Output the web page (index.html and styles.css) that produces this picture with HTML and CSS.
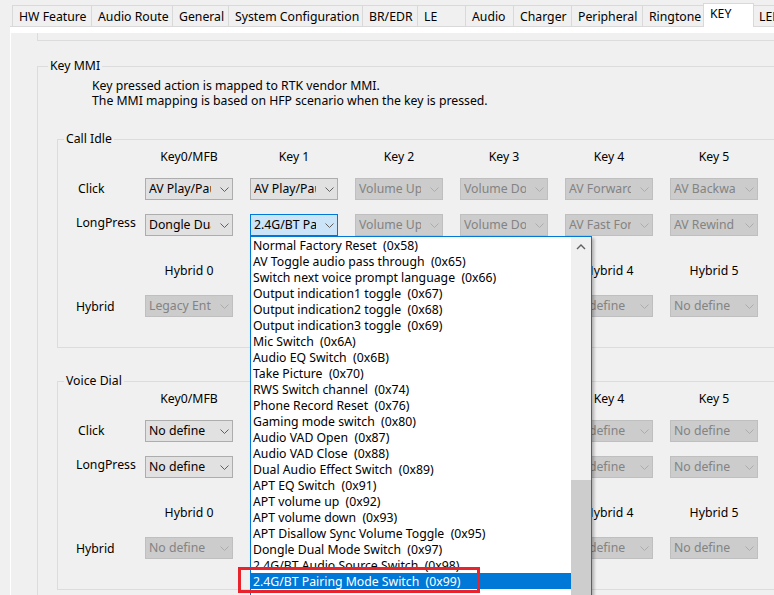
FILE: index.html
```html
<!DOCTYPE html>
<html lang="en">
<head>
<meta charset="utf-8">
<title>KEY</title>
<link rel="stylesheet" href="styles.css">
</head>
<body>
<div class="tabs">
  <div class="tab t-hw">HW Feature</div>
  <div class="tab t-route">Audio Route</div>
  <div class="tab t-gen">General</div>
  <div class="tab t-sys">System Configuration</div>
  <div class="tab t-br">BR/EDR</div>
  <div class="tab t-le">LE</div>
  <div class="tab t-audio">Audio</div>
  <div class="tab t-chg">Charger</div>
  <div class="tab t-per">Peripheral</div>
  <div class="tab t-ring">Ringtone</div>
  <div class="tab t-key active">KEY</div>
  <div class="tab t-led">LED</div>
</div>
<div class="page">
  <div class="scroll">
    <div class="prev-group"></div>
    <fieldset class="group group-mmi">
      <legend>Key MMI</legend>
      <p class="note">Key pressed action is mapped to RTK vendor MMI.<br>The MMI mapping is based on HFP scenario when the key is pressed.</p>

      <fieldset class="group group-sub group-idle">
        <legend>Call Idle</legend>
        <div class="keygrid">
          <div></div>
          <div class="hdr">Key0/MFB</div>
          <div class="hdr">Key 1</div>
          <div class="hdr">Key 2</div>
          <div class="hdr">Key 3</div>
          <div class="hdr">Key 4</div>
          <div class="hdr">Key 5</div>

          <div class="lbl lbl-click">Click</div>
          <div class="combo"><span class="val">AV Play/Pause</span><svg class="chev" viewBox="0 0 9 5"><path d="M0.5 0.5L4.5 4.5L8.5 0.5"/></svg></div>
          <div class="combo"><span class="val">AV Play/Pause</span><svg class="chev" viewBox="0 0 9 5"><path d="M0.5 0.5L4.5 4.5L8.5 0.5"/></svg></div>
          <div class="combo dis"><span class="val">Volume Up</span><svg class="chev" viewBox="0 0 9 5"><path d="M0.5 0.5L4.5 4.5L8.5 0.5"/></svg></div>
          <div class="combo dis"><span class="val">Volume Down</span><svg class="chev" viewBox="0 0 9 5"><path d="M0.5 0.5L4.5 4.5L8.5 0.5"/></svg></div>
          <div class="combo dis"><span class="val">AV Forward</span><svg class="chev" viewBox="0 0 9 5"><path d="M0.5 0.5L4.5 4.5L8.5 0.5"/></svg></div>
          <div class="combo dis"><span class="val">AV Backward</span><svg class="chev" viewBox="0 0 9 5"><path d="M0.5 0.5L4.5 4.5L8.5 0.5"/></svg></div>

          <div class="lbl lbl-lp">LongPress</div>
          <div class="combo"><span class="val">Dongle Dual Mode Switch</span><svg class="chev" viewBox="0 0 9 5"><path d="M0.5 0.5L4.5 4.5L8.5 0.5"/></svg></div>
          <div class="combo focus"><span class="val">2.4G/BT Pairing Mode Switch</span><svg class="chev" viewBox="0 0 9 5"><path d="M0.5 0.5L4.5 4.5L8.5 0.5"/></svg>
            <div class="dropdown">
              <div class="list">
                <div class="item">Normal Factory Reset  (0x58)</div>
                <div class="item">AV Toggle audio pass through  (0x65)</div>
                <div class="item">Switch next voice prompt language  (0x66)</div>
                <div class="item">Output indication1 toggle  (0x67)</div>
                <div class="item">Output indication2 toggle  (0x68)</div>
                <div class="item">Output indication3 toggle  (0x69)</div>
                <div class="item">Mic Switch  (0x6A)</div>
                <div class="item">Audio EQ Switch  (0x6B)</div>
                <div class="item">Take Picture  (0x70)</div>
                <div class="item">RWS Switch channel  (0x74)</div>
                <div class="item">Phone Record Reset  (0x76)</div>
                <div class="item">Gaming mode switch  (0x80)</div>
                <div class="item">Audio VAD Open  (0x87)</div>
                <div class="item">Audio VAD Close  (0x88)</div>
                <div class="item">Dual Audio Effect Switch  (0x89)</div>
                <div class="item">APT EQ Switch  (0x91)</div>
                <div class="item">APT volume up  (0x92)</div>
                <div class="item">APT volume down  (0x93)</div>
                <div class="item">APT Disallow Sync Volume Toggle  (0x95)</div>
                <div class="item">Dongle Dual Mode Switch  (0x97)</div>
                <div class="item">2.4G/BT Audio Source Switch  (0x98)</div>
                <div class="item sel">2.4G/BT Pairing Mode Switch  (0x99)</div>
              </div>
              <div class="vscroll">
                <div class="up"><svg viewBox="0 0 10 6"><path d="M1 5L5 1L9 5"/></svg></div>
                <div class="thumb"></div>
              </div>
              <div class="mark"></div>
            </div>
          </div>
          <div class="combo dis"><span class="val">Volume Up</span><svg class="chev" viewBox="0 0 9 5"><path d="M0.5 0.5L4.5 4.5L8.5 0.5"/></svg></div>
          <div class="combo dis"><span class="val">Volume Down</span><svg class="chev" viewBox="0 0 9 5"><path d="M0.5 0.5L4.5 4.5L8.5 0.5"/></svg></div>
          <div class="combo dis"><span class="val">AV Fast Forward</span><svg class="chev" viewBox="0 0 9 5"><path d="M0.5 0.5L4.5 4.5L8.5 0.5"/></svg></div>
          <div class="combo dis"><span class="val">AV Rewind</span><svg class="chev" viewBox="0 0 9 5"><path d="M0.5 0.5L4.5 4.5L8.5 0.5"/></svg></div>

          <div></div>
          <div class="hdr">Hybrid 0</div>
          <div class="hdr">Hybrid 1</div>
          <div class="hdr">Hybrid 2</div>
          <div class="hdr">Hybrid 3</div>
          <div class="hdr">Hybrid 4</div>
          <div class="hdr">Hybrid 5</div>

          <div class="lbl lbl-hy">Hybrid</div>
          <div class="combo dis"><span class="val">Legacy Enter</span><svg class="chev" viewBox="0 0 9 5"><path d="M0.5 0.5L4.5 4.5L8.5 0.5"/></svg></div>
          <div class="combo dis"><span class="val">No define</span><svg class="chev" viewBox="0 0 9 5"><path d="M0.5 0.5L4.5 4.5L8.5 0.5"/></svg></div>
          <div class="combo dis"><span class="val">No define</span><svg class="chev" viewBox="0 0 9 5"><path d="M0.5 0.5L4.5 4.5L8.5 0.5"/></svg></div>
          <div class="combo dis"><span class="val">No define</span><svg class="chev" viewBox="0 0 9 5"><path d="M0.5 0.5L4.5 4.5L8.5 0.5"/></svg></div>
          <div class="combo dis"><span class="val">No define</span><svg class="chev" viewBox="0 0 9 5"><path d="M0.5 0.5L4.5 4.5L8.5 0.5"/></svg></div>
          <div class="combo dis"><span class="val">No define</span><svg class="chev" viewBox="0 0 9 5"><path d="M0.5 0.5L4.5 4.5L8.5 0.5"/></svg></div>
        </div>
      </fieldset>

      <fieldset class="group group-sub group-voice">
        <legend>Voice Dial</legend>
        <div class="keygrid">
          <div></div>
          <div class="hdr">Key0/MFB</div>
          <div class="hdr">Key 1</div>
          <div class="hdr">Key 2</div>
          <div class="hdr">Key 3</div>
          <div class="hdr">Key 4</div>
          <div class="hdr">Key 5</div>

          <div class="lbl lbl-click">Click</div>
          <div class="combo"><span class="val">No define</span><svg class="chev" viewBox="0 0 9 5"><path d="M0.5 0.5L4.5 4.5L8.5 0.5"/></svg></div>
          <div class="combo dis"><span class="val">No define</span><svg class="chev" viewBox="0 0 9 5"><path d="M0.5 0.5L4.5 4.5L8.5 0.5"/></svg></div>
          <div class="combo dis"><span class="val">No define</span><svg class="chev" viewBox="0 0 9 5"><path d="M0.5 0.5L4.5 4.5L8.5 0.5"/></svg></div>
          <div class="combo dis"><span class="val">No define</span><svg class="chev" viewBox="0 0 9 5"><path d="M0.5 0.5L4.5 4.5L8.5 0.5"/></svg></div>
          <div class="combo dis"><span class="val">No define</span><svg class="chev" viewBox="0 0 9 5"><path d="M0.5 0.5L4.5 4.5L8.5 0.5"/></svg></div>
          <div class="combo dis"><span class="val">No define</span><svg class="chev" viewBox="0 0 9 5"><path d="M0.5 0.5L4.5 4.5L8.5 0.5"/></svg></div>

          <div class="lbl lbl-lp">LongPress</div>
          <div class="combo"><span class="val">No define</span><svg class="chev" viewBox="0 0 9 5"><path d="M0.5 0.5L4.5 4.5L8.5 0.5"/></svg></div>
          <div class="combo dis"><span class="val">No define</span><svg class="chev" viewBox="0 0 9 5"><path d="M0.5 0.5L4.5 4.5L8.5 0.5"/></svg></div>
          <div class="combo dis"><span class="val">No define</span><svg class="chev" viewBox="0 0 9 5"><path d="M0.5 0.5L4.5 4.5L8.5 0.5"/></svg></div>
          <div class="combo dis"><span class="val">No define</span><svg class="chev" viewBox="0 0 9 5"><path d="M0.5 0.5L4.5 4.5L8.5 0.5"/></svg></div>
          <div class="combo dis"><span class="val">No define</span><svg class="chev" viewBox="0 0 9 5"><path d="M0.5 0.5L4.5 4.5L8.5 0.5"/></svg></div>
          <div class="combo dis"><span class="val">No define</span><svg class="chev" viewBox="0 0 9 5"><path d="M0.5 0.5L4.5 4.5L8.5 0.5"/></svg></div>

          <div></div>
          <div class="hdr">Hybrid 0</div>
          <div class="hdr">Hybrid 1</div>
          <div class="hdr">Hybrid 2</div>
          <div class="hdr">Hybrid 3</div>
          <div class="hdr">Hybrid 4</div>
          <div class="hdr">Hybrid 5</div>

          <div class="lbl lbl-hy">Hybrid</div>
          <div class="combo dis"><span class="val">No define</span><svg class="chev" viewBox="0 0 9 5"><path d="M0.5 0.5L4.5 4.5L8.5 0.5"/></svg></div>
          <div class="combo dis"><span class="val">No define</span><svg class="chev" viewBox="0 0 9 5"><path d="M0.5 0.5L4.5 4.5L8.5 0.5"/></svg></div>
          <div class="combo dis"><span class="val">No define</span><svg class="chev" viewBox="0 0 9 5"><path d="M0.5 0.5L4.5 4.5L8.5 0.5"/></svg></div>
          <div class="combo dis"><span class="val">No define</span><svg class="chev" viewBox="0 0 9 5"><path d="M0.5 0.5L4.5 4.5L8.5 0.5"/></svg></div>
          <div class="combo dis"><span class="val">No define</span><svg class="chev" viewBox="0 0 9 5"><path d="M0.5 0.5L4.5 4.5L8.5 0.5"/></svg></div>
          <div class="combo dis"><span class="val">No define</span><svg class="chev" viewBox="0 0 9 5"><path d="M0.5 0.5L4.5 4.5L8.5 0.5"/></svg></div>
        </div>
      </fieldset>
    </fieldset>
  </div>
</div>
</body>
</html>
```
FILE: styles.css
```css
* { box-sizing: border-box; }
html, body { margin: 0; padding: 0; }
body {
  width: 774px;
  height: 595px;
  overflow: hidden;
  background: #f0f0f0;
  font-family: "Noto Sans", "Open Sans", sans-serif;
  font-size: 12.25px;
  line-height: 16px;
  color: #000;
}

/* Tabs */
.tabs {
  display: flex;
  align-items: flex-end;
  height: 26px;
  padding-left: 12px;
}
.tab {
  flex: none;
  height: 21px;
  border: 1px solid #d9d9d9;
  border-bottom: none;
  margin-right: -1px;
  padding-left: 6px;
  line-height: 21px;
  white-space: nowrap;
  overflow: hidden;
  background: #f0f0f0;
}
.t-hw { width: 80px; }
.t-route { width: 82px; }
.t-gen { width: 57px; }
.t-sys { width: 135px; }
.t-br { width: 56px; }
.t-le { width: 49px; }
.t-audio { width: 49px; }
.t-chg { width: 59px; }
.t-per { width: 72px; }
.t-ring { width: 64px; }
.t-led { width: 40px; padding-left: 5px; }
.tab.active {
  position: relative;
  z-index: 2;
  width: 51px;
  height: 24px;
  margin-left: -2px;
  margin-right: -1px;
  margin-bottom: -1px;
  background: #fff;
  line-height: 20px;
}

/* Page */
.page {
  margin-left: 10px;
  height: 569px;
  border-top: 1px solid #d9d9d9;
  background: #fff;
  padding: 6px 0 0 1px;
}
.scroll {
  height: 100%;
  overflow: hidden;
  background: #f0f0f0;
}
.prev-group {
  margin-left: 26px;
  width: 800px;
  height: 8px;
  border-left: 1px solid #dcdcdc;
  border-bottom: 1px solid #dcdcdc;
}

/* Group boxes */
.group {
  min-width: 0;
  margin: 0;
  border: 1px solid #dcdcdc;
}
.group legend {
  padding: 0 2px;
  line-height: 16px;
}
.group-mmi {
  margin: 17px 0 0 26px;
  width: 800px;
  padding: 0 0 20px 10px;
}
.note {
  margin: 4px 0 0 44px;
  line-height: 15px;
}
.group-sub {
  margin-left: 9px;
  width: 760px;
  padding: 2px 0 30px 6px;
}
.group-idle { margin-top: 23px; }
.group-voice { margin-top: 25px; padding-top: 2px; }

/* Key grid */
.keygrid {
  display: grid;
  margin-left: 12px;
  grid-template-columns: 52px repeat(6, 88px);
  grid-template-rows: 29px 36px 49px 32px 22px;
  column-gap: 17px;
  align-items: start;
}
.hdr {
  text-align: center;
  line-height: 16px;
  white-space: nowrap;
}
.lbl {
  height: 22px;
  line-height: 22px;
  white-space: nowrap;
}
.lbl-click { padding-left: 2px; }
.lbl-lp { line-height: 18px; }
.lbl-hy { line-height: 24px; }

/* Combo boxes */
.combo {
  display: flex;
  align-items: center;
  width: 88px;
  height: 22px;
  border: 1px solid #adadad;
  background: #e1e1e1;
}
.combo .val {
  flex: none;
  width: 62px;
  margin-left: 3px;
  overflow: hidden;
  white-space: nowrap;
  line-height: 20px;
}
.chev {
  flex: none;
  width: 9px;
  height: 5px;
  margin-left: 9px;
  overflow: visible;
}
.chev path {
  fill: none;
  stroke: #5f5f5f;
  stroke-width: 1;
}
.combo.dis {
  background: #cccccc;
  border-color: #bfbfbf;
  color: #838383;
}
.combo.dis .chev path { stroke: #acacac; }
.combo.focus {
  position: relative;
  background: #cce4f7;
  border-color: #0078d7;
}

/* Dropdown list */
.dropdown {
  position: absolute;
  left: -1px;
  top: 21px;
  z-index: 5;
  display: flex;
  width: 342px;
  height: 380px;
  border: 1px solid #0078d7;
  background: #fff;
  color: #000;
  box-shadow: 2px 2px 3px rgba(0, 0, 0, 0.28);
}
.list {
  width: 320px;
  flex: none;
}
.item {
  height: 16px;
  line-height: 16px;
  padding: 1px 0 0 2px;
  white-space: pre;
}
.item.sel {
  background: #0078d7;
  color: #fff;
}
.vscroll {
  flex: none;
  width: 20px;
  display: flex;
  flex-direction: column;
  background: #f0f0f0;
}
.vscroll .up {
  height: 19px;
  display: flex;
  align-items: center;
  justify-content: center;
}
.vscroll .up svg {
  width: 10px;
  height: 6px;
}
.vscroll .up path {
  fill: none;
  stroke: #606060;
  stroke-width: 1.4;
}
.vscroll .thumb {
  margin-top: 224px;
  flex: 1;
  background: #cdcdcd;
}
.mark {
  position: absolute;
  left: -13px;
  top: 330px;
  width: 242px;
  height: 26px;
  border: 3px solid #e8232b;
}
```
